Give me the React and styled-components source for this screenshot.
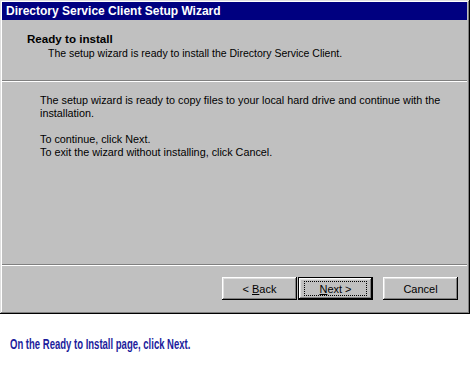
import React from 'react';
import styled, { createGlobalStyle } from 'styled-components';

const GlobalStyle = createGlobalStyle`
  body {
    margin: 0;
    background: #fff;
    font-family: "Liberation Sans", Arial, sans-serif;
  }
`;

const App = () => {
  return (
    <Page>
      <GlobalStyle />
      <Dialog>
        <TitleBar>Directory Service Client Setup Wizard</TitleBar>
        <Header>
          <Heading>Ready to install</Heading>
          <SubHeading>The setup wizard is ready to install the Directory Service Client.</SubHeading>
        </Header>
        <Divider />
        <Body>
          <Para>
            The setup wizard is ready to copy files to your local hard drive and continue with the
            <br />
            installation.
          </Para>
          <Para>
            To continue, click Next.
            <br />
            To exit the wizard without installing, click Cancel.
          </Para>
        </Body>
        <Divider />
        <Footer>
          <ButtonPair>
            <Button>
              <Label>&lt; <u>B</u>ack</Label>
            </Button>
            <Button isDefault>
              <FocusRing><u>N</u>ext &gt;</FocusRing>
            </Button>
          </ButtonPair>
          <Button>
            <Label>Cancel</Label>
          </Button>
        </Footer>
      </Dialog>
      <Caption>On the Ready to Install page, click Next.</Caption>
    </Page>
  );
};

const Page = styled.div`
  width: 470px;
  height: 385px;
  background: #fff;
`;

const Dialog = styled.div`
  box-sizing: border-box;
  width: 470px;
  height: 314px;
  padding: 2px;
  background: #c0c0c0;
  display: flex;
  flex-direction: column;
  box-shadow: inset -1px -1px #000, inset 1px 1px #dfdfdf, inset -2px -2px #808080, inset 2px 2px #fff;
`;

const TitleBar = styled.div`
  height: 18px;
  line-height: 18px;
  background: #000080;
  color: #fff;
  font-weight: bold;
  font-size: 12px;
  padding-left: 4px;
  margin-right: 1px;
`;

const Header = styled.div`
  height: 60px;
  box-sizing: border-box;
  padding: 12px 0 0 25px;
  font-size: 10.5px;
  color: #000;
`;

const Heading = styled.div`
  font-weight: bold;
  font-size: 11.6px;
  line-height: 13px;
  margin-bottom: 2px;
`;

const SubHeading = styled.div`
  line-height: 13px;
  padding-left: 21px;
`;

const Divider = styled.div`
  height: 1px;
  background: #808080;
  border-bottom: 1px solid #fff;
  margin-right: 1px;
`;

const Body = styled.div`
  flex: 1;
  padding: 12px 0 0 38px;
  font-size: 10.8px;
  color: #000;
`;

const Para = styled.p`
  margin: 0 0 13px;
  line-height: 13px;
`;

const Footer = styled.div`
  height: 46px;
  box-sizing: border-box;
  padding: 11px 10px 0 0;
  display: flex;
  justify-content: flex-end;
  align-items: flex-start;
  gap: 10px;
`;

const ButtonPair = styled.div`
  display: flex;
  gap: 1px;
`;

const Button = styled.div`
  box-sizing: border-box;
  width: 75px;
  height: 23px;
  display: flex;
  align-items: center;
  justify-content: center;
  font-size: 11px;
  color: #000;
  background: #c0c0c0;
  border: ${(p) => (p.isDefault ? '1px solid #000' : 'none')};
  box-shadow: inset -1px -1px #000, inset 1px 1px #fff, inset -2px -2px #808080, inset 2px 2px #dfdfdf;
`;

const Label = styled.span`
  white-space: pre;
`;

const FocusRing = styled.span`
  box-sizing: border-box;
  width: 63px;
  height: 15px;
  display: flex;
  align-items: center;
  justify-content: center;
  white-space: pre;
  border: 1px dotted #000;
`;

const Caption = styled.div`
  display: inline-block;
  margin: 22px 0 0 10px;
  font-family: "Liberation Sans", sans-serif;
  font-weight: bold;
  font-size: 14px;
  color: #1c1c9c;
  white-space: nowrap;
  transform: scaleX(0.68);
  transform-origin: left center;
`;

export default App;
